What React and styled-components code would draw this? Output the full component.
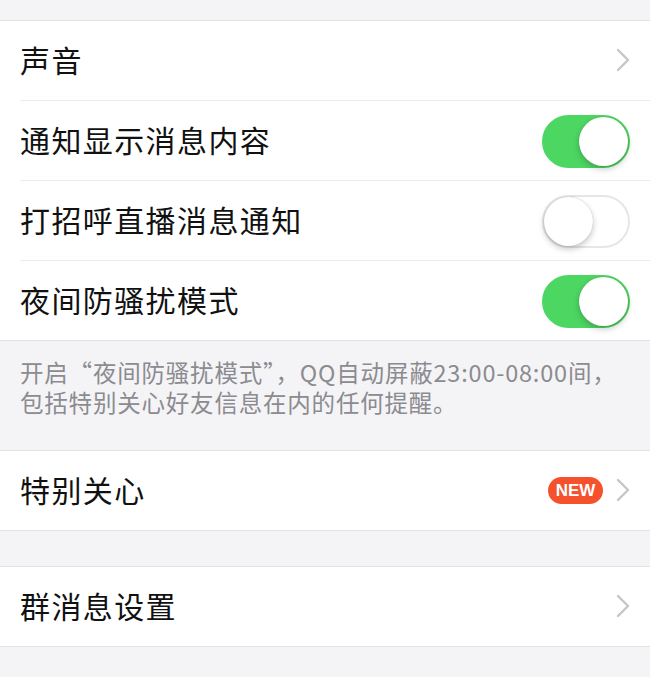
import styled, { createGlobalStyle } from 'styled-components';

const GlobalStyle = createGlobalStyle`
  html, body {
    margin: 0;
    padding: 0;
    background: #f4f4f6;
  }
  body {
    font-family: "Noto Sans CJK SC", "Noto Sans", sans-serif;
    -webkit-font-smoothing: antialiased;
  }
`;

const Page = styled.div`
  width: 650px;
  min-height: 677px;
  background: #f4f4f6;
  padding-top: 20px;
  box-sizing: border-box;
`;

const Group = styled.section`
  background: #fff;
  border-top: 1px solid #e3e3e6;
  border-bottom: 1px solid #e3e3e6;
  margin-bottom: ${(p) => p.$gap || 0}px;
`;

const Row = styled.div`
  padding-left: 20px;
  & + & > div {
    border-top: 1px solid #ebebed;
  }
`;

// content-box: the inner separator adds its pixel on top of the 79px row
const RowBody = styled.div`
  display: flex;
  align-items: center;
  height: 79px;
  padding-right: 20px;
`;

const Label = styled.span`
  flex: 1;
  font-size: 30px;
  letter-spacing: 1.4px;
  color: #111;
  line-height: 1;
  margin-top: -3px;
`;

const Toggle = styled.button`
  position: relative;
  width: 88px;
  height: 53px;
  margin-top: 1px;
  border-radius: 27px;
  border: 2px solid ${(p) => (p.$on ? '#4cd662' : '#e6e6e8')};
  background: ${(p) => (p.$on ? '#4cd662' : '#fff')};
  padding: 0;
  box-sizing: border-box;
  cursor: pointer;

  &::after {
    content: '';
    position: absolute;
    top: 0;
    left: ${(p) => (p.$on ? '35px' : '0')};
    width: 49px;
    height: 49px;
    border-radius: 50%;
    background: #fff;
    box-shadow: 0 3px 6px rgba(0, 0, 0, 0.22), 0 0 1px rgba(0, 0, 0, 0.25);
  }
`;

const Badge = styled.span`
  display: inline-flex;
  align-items: center;
  justify-content: center;
  width: 55px;
  height: 27px;
  border-radius: 14px;
  background: #f4512c;
  color: #fff;
  font-family: "Liberation Sans", Arial, sans-serif;
  font-weight: bold;
  font-size: 17px;
  margin-right: 13px;
`;

const Note = styled.p`
  margin: 0;
  padding: 16px 20px 33px;
  font-size: 23.5px;
  line-height: 30px;
  letter-spacing: 0.8px;
  color: #8b8b90;
`;

const Chevron = () => (
  <svg width="14" height="24" viewBox="0 0 14 24" style={{ marginTop: -2 }}>
    <path d="M2 2 L12 12 L2 22" fill="none" stroke="#c5c5ca" strokeWidth="2.4" strokeLinecap="round" strokeLinejoin="round" />
  </svg>
);

const SettingRow = ({ label, toggle, on, badge }) => (
  <Row>
    <RowBody>
      <Label>{label}</Label>
      {toggle ? (
        <Toggle $on={on} aria-pressed={on} />
      ) : (
        <>
          {badge && <Badge>{badge}</Badge>}
          <Chevron />
        </>
      )}
    </RowBody>
  </Row>
);

export default function App() {
  return (
    <Page>
      <GlobalStyle />
      <Group>
        <SettingRow label="声音" />
        <SettingRow label="通知显示消息内容" toggle on />
        <SettingRow label="打招呼直播消息通知" toggle on={false} />
        <SettingRow label="夜间防骚扰模式" toggle on />
      </Group>
      <Note>
        开启“夜间防骚扰模式”，QQ自动屏蔽23:00-08:00间，
        <br />
        包括特别关心好友信息在内的任何提醒。
      </Note>
      <Group $gap={35}>
        <SettingRow label="特别关心" badge="NEW" />
      </Group>
      <Group>
        <SettingRow label="群消息设置" />
      </Group>
    </Page>
  );
}
